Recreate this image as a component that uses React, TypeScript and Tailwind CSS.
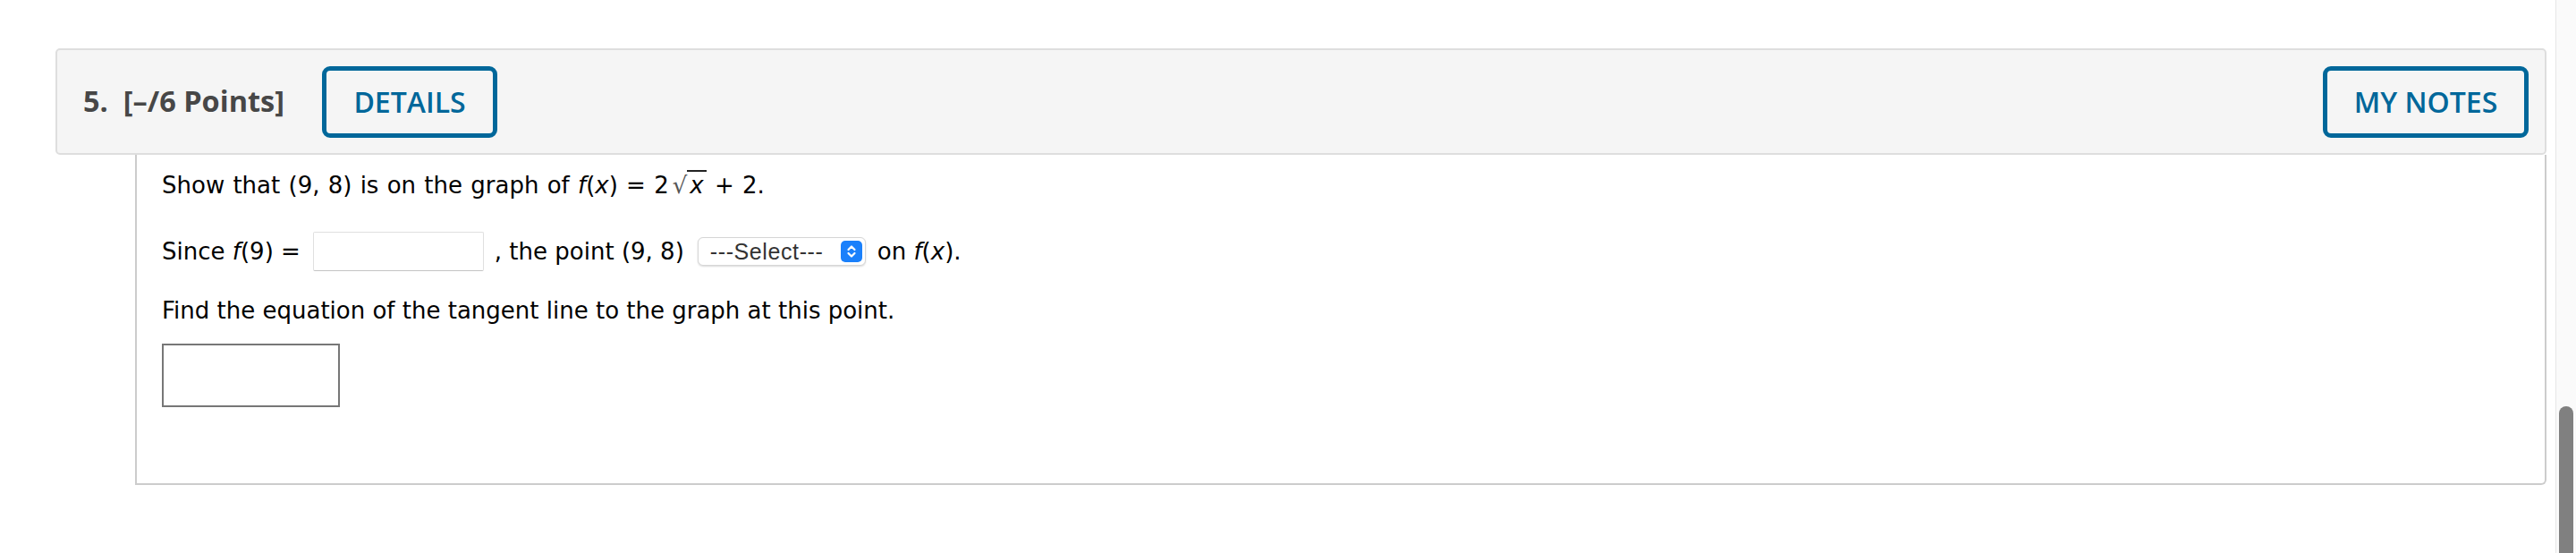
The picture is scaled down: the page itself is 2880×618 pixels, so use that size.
import React from 'react';

const body = "font-['DejaVu_Sans',Verdana,sans-serif]";

const Fx: React.FC<{ arg: React.ReactNode }> = ({ arg }) => (
  <span>
    <i>f</i>({arg})
  </span>
);

const App: React.FC = () => {
  return (
    <div className="flex w-[2880px] h-[618px] bg-white overflow-hidden">
      {/* Page content */}
      <div className="flex-1 pt-[54px] pl-[62px] pr-[10px]">
        {/* Question header */}
        <div className="h-[119px] bg-[#f5f5f5] border-2 border-[#dedede] rounded-[5px] pl-[29px] pr-[18px] flex items-center justify-between">
          <div className="flex items-center gap-[42px]">
            <span className="font-['Open_Sans',sans-serif] font-bold text-[32.5px] text-[#474747]">
              5.&nbsp; [–/6 Points]
            </span>
            <button className="w-[196px] h-[80px] border-[5px] border-[#00679a] rounded-[9px] text-[#00679a] font-['Open_Sans',sans-serif] font-semibold text-[32px] bg-transparent">
              DETAILS
            </button>
          </div>
          <button className="w-[230px] h-[80px] border-[5px] border-[#00679a] rounded-[9px] text-[#00679a] font-['Open_Sans',sans-serif] font-semibold text-[32px] bg-transparent">
            MY NOTES
          </button>
        </div>

        {/* Question body */}
        <div className={`ml-[89px] h-[369px] border-l-2 border-r-2 border-b-2 border-[#cccccc] rounded-br-[6px] pl-[28px] pt-[18px] text-[26px] leading-[33px] text-black ${body}`}>
          <p className="[word-spacing:1px]">
            Show that (9, 8) is on the graph of <Fx arg={<i>x</i>} /> = 2
            <span className="ml-[4px] text-[#555]">√</span>
            <span className="border-t-2 border-[#222] px-[3px]">
              <i>x</i>
            </span>{' '}
            + 2.
          </p>

          <div className="mt-[35px] flex items-center h-[44px]">
            <span>
              Since <Fx arg="9" /> =
            </span>
            <span className="ml-[14px] w-[191px] h-[44px] bg-white border border-[#e0e0e0] border-b-[#c4c4c4] rounded-[2px]" />
            <span className="ml-[12px]">, the point (9, 8)</span>
            <span className="ml-[15px] w-[188px] h-[32px] rounded-[6px] border border-[#d6d6d6] shadow-[0_1px_2px_rgba(0,0,0,0.15)] bg-white flex items-center justify-between pl-[13px] pr-[3px] font-['Liberation_Sans',Arial,sans-serif] text-[25px] tracking-[0.6px] text-[#333]">
              ---Select---
              <span className="w-[24px] h-[24px] rounded-[5px] bg-[#1a80fb] flex items-center justify-center">
                <svg width="12" height="16" viewBox="0 0 12 16" fill="none" stroke="white" strokeWidth="2.2" strokeLinecap="round" strokeLinejoin="round">
                  <path d="M2.5 6 L6 2.5 L9.5 6" />
                  <path d="M2.5 10 L6 13.5 L9.5 10" />
                </svg>
              </span>
            </span>
            <span className="ml-[13px]">
              on <Fx arg={<i>x</i>} />.
            </span>
          </div>

          <p className="mt-[28px]">Find the equation of the tangent line to the graph at this point.</p>

          <div className="mt-[20px] w-[199px] h-[71px] border-2 border-[#777777] bg-white" />
        </div>
      </div>

      {/* Scrollbar */}
      <div className="w-[23px] h-full bg-[#fafafa] border-l border-[#e6e6e6] pl-[3px] pt-[454px]">
        <div className="w-[16px] h-[200px] rounded-full bg-[#808080]" />
      </div>
    </div>
  );
};

export default App;
